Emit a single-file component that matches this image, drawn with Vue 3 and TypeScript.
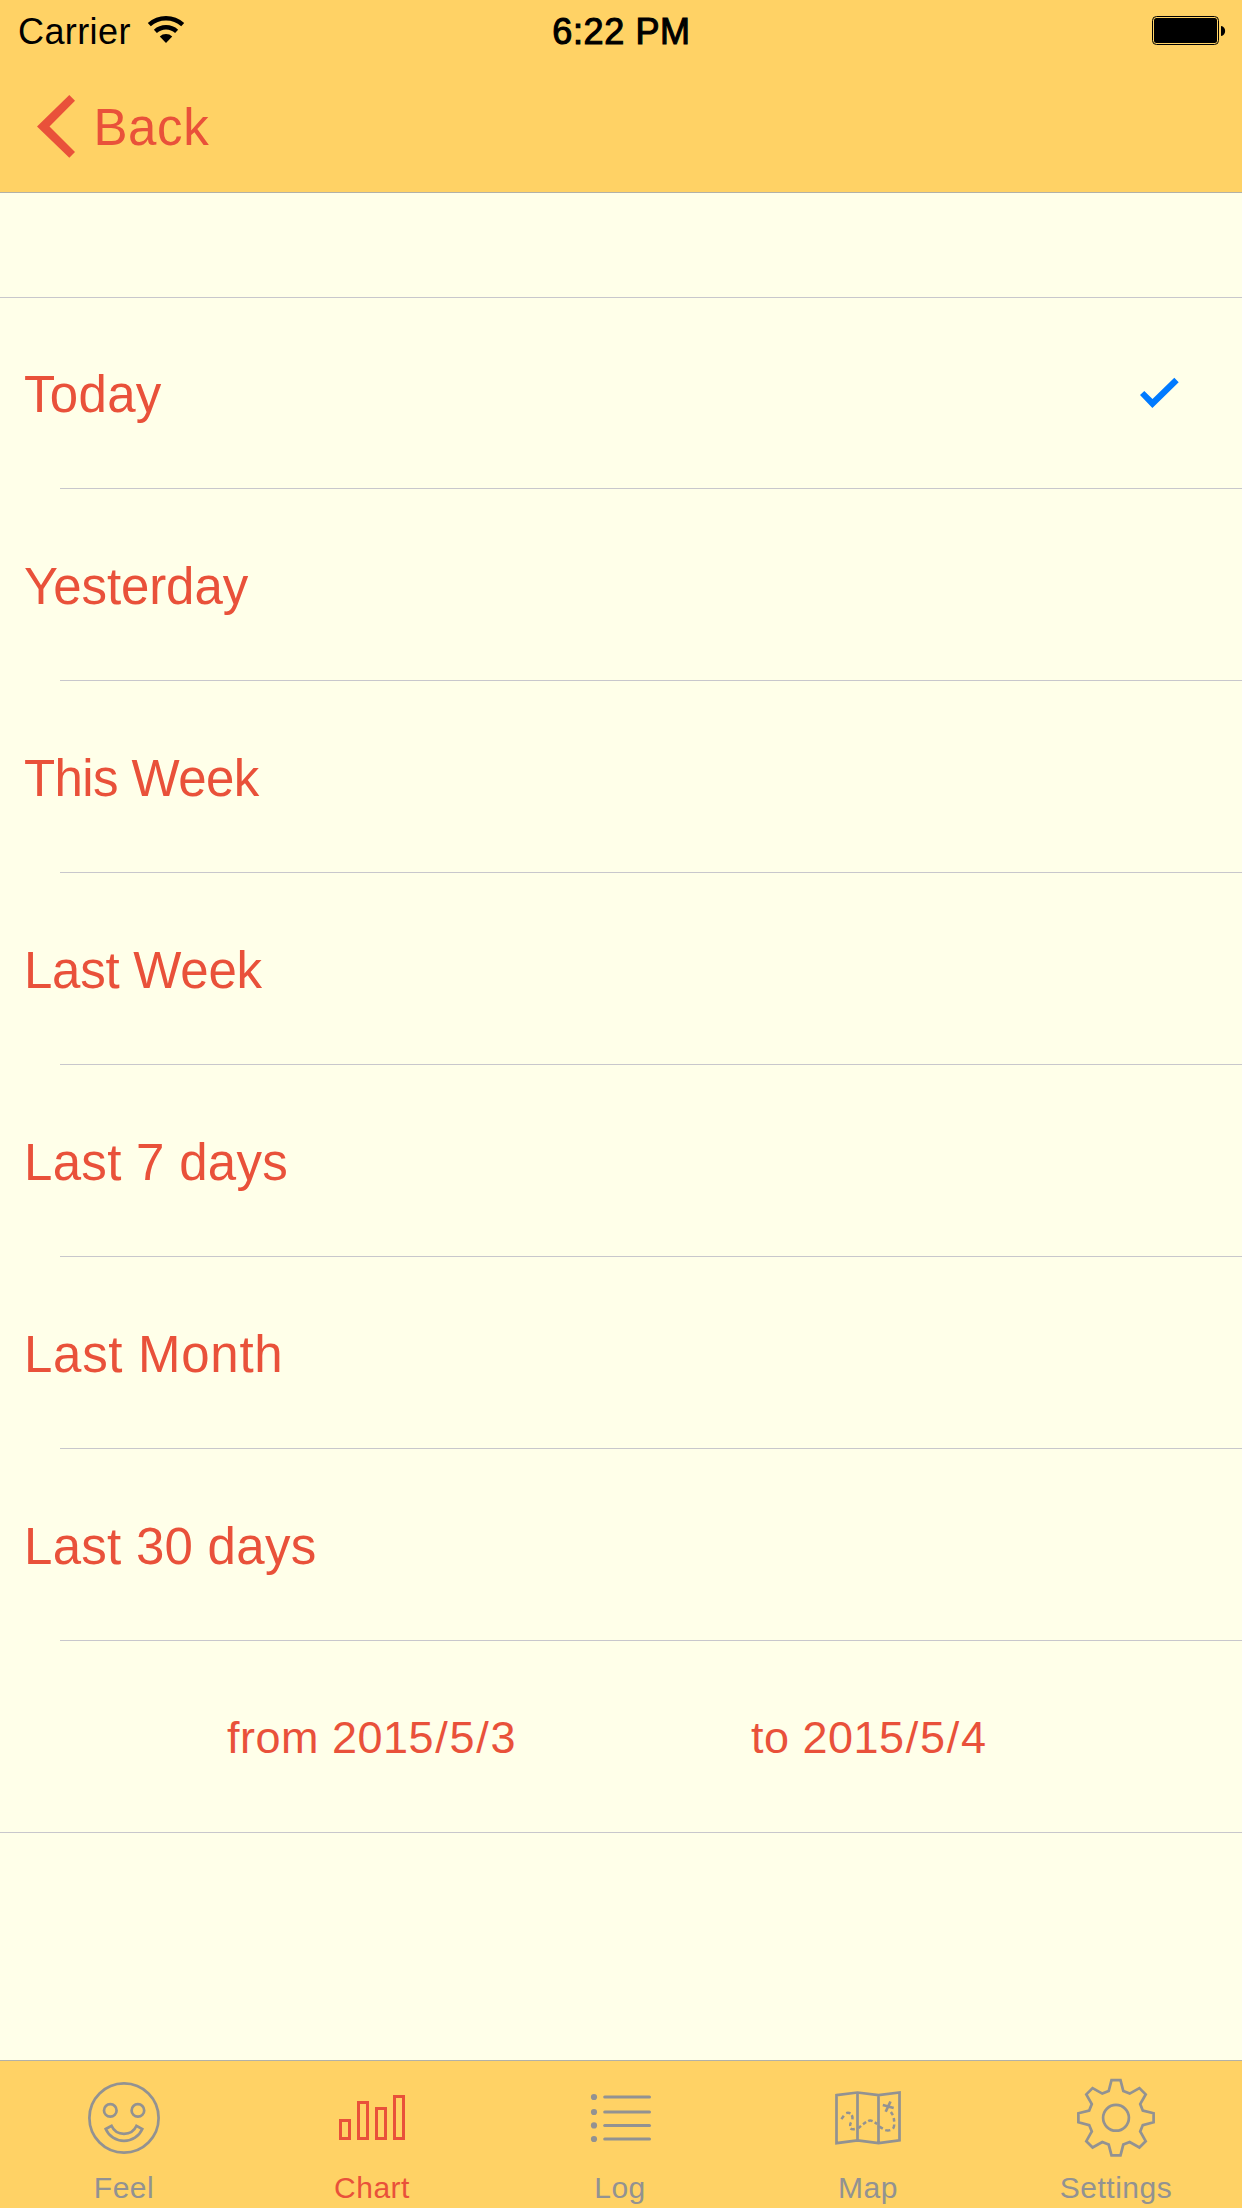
<script setup lang="ts">
import { ref } from 'vue'

interface Period {
  label: string
  spacing: number
}

interface Tab {
  id: string
  label: string
}

const periods: Period[] = [
  { label: 'Today', spacing: 0.3 },
  { label: 'Yesterday', spacing: -0.1 },
  { label: 'This Week', spacing: -0.6 },
  { label: 'Last Week', spacing: -0.25 },
  { label: 'Last 7 days', spacing: 0.3 },
  { label: 'Last Month', spacing: 0.7 },
  { label: 'Last 30 days', spacing: 0.27 },
]

const tabs: Tab[] = [
  { id: 'feel', label: 'Feel' },
  { id: 'chart', label: 'Chart' },
  { id: 'log', label: 'Log' },
  { id: 'map', label: 'Map' },
  { id: 'settings', label: 'Settings' },
]

const selected = ref('Today')
const activeTab = ref('chart')
const from = ['2015', '5', '3']
const to = ['2015', '5', '4']

const logLines = [-21, -6, 7.4, 21]
const bars = [
  { x: -31.5, y: 2.5 },
  { x: -13.5, y: -15.5 },
  { x: 4.5, y: -9.5 },
  { x: 22.5, y: -21.5 },
]

// One quarter of the gear outline, repeated by 90° turns
const quarter: [number, number][] = [
  [-4.5, -37.6], [4.5, -37.6], [7.3, -26.8], [13.7, -24.2],
  [23.4, -29.7], [29.7, -23.4], [24.2, -13.7], [26.8, -7.3],
]
const gear = [0, 1, 2, 3]
  .flatMap((turn) =>
    quarter.map(([x, y]) => {
      let p: [number, number] = [x, y]
      for (let i = 0; i < turn; i++) p = [-p[1], p[0]]
      return p.join(',')
    }),
  )
  .join(' ')
</script>

<template>
  <div class="screen">
    <header class="top">
      <div class="status">
        <div class="carrier">
          <span>Carrier</span>
          <svg class="wifi" width="38" height="30" viewBox="-19 -28 38 30">
            <g fill="none" stroke="#000" stroke-width="4.5">
              <path d="M-16.7-18.4A24.8 24.8 0 0 1 16.7-18.4" />
              <path d="M-10.6-11.7A15.8 15.8 0 0 1 10.6-11.7" />
            </g>
            <path d="M0 0L-6.2-6.6A9 9 0 0 1 6.2-6.6Z" />
          </svg>
        </div>
        <div class="time">6:22 PM</div>
        <svg class="battery" width="74" height="30" viewBox="1152 16 74 30">
          <rect x="1152.5" y="16.5" width="66" height="28" rx="4" fill="none" stroke="#000" />
          <rect x="1154" y="18" width="63" height="25" rx="2.5" />
          <path d="M1221 26C1226.500 26.500 1226.500 35.500 1221 36Z" />
        </svg>
      </div>
      <nav class="nav">
        <button class="back">
          <svg width="38" height="63" viewBox="37 95 38 63">
            <path d="M37 126.400L69.300 95L75 100.700L49.500 126.400L75 152L69.300 157.800Z" fill="#e9513a" />
          </svg>
          <span>Back</span>
        </button>
      </nav>
    </header>

    <main class="content">
      <ul class="list">
        <li v-for="p in periods" :key="p.label" class="row" @click="selected = p.label">
          <span :style="{ letterSpacing: p.spacing + 'px' }">{{ p.label }}</span>
          <svg v-if="p.label === selected" class="check" width="40" height="32" viewBox="1140 377 40 32">
            <path d="M1140 395L1144.300 391L1152.500 399L1174.300 377.700L1178.700 382.300L1152.400 408Z" fill="#007aff" />
          </svg>
        </li>
        <li class="row range">
          <span class="from">from {{ from[0] }}<i>/</i>{{ from[1] }}<i>/</i>{{ from[2] }}</span>
          <span class="to">to {{ to[0] }}<i>/</i>{{ to[1] }}<i>/</i>{{ to[2] }}</span>
        </li>
      </ul>
    </main>

    <footer class="tabs">
      <button
        v-for="t in tabs"
        :key="t.id"
        class="tab"
        :class="{ active: t.id === activeTab }"
        @click="activeTab = t.id"
      >
        <svg width="110" height="90" viewBox="-55 -45 110 90" fill="none" stroke="currentColor" stroke-width="2.7">
          <template v-if="t.id === 'feel'">
            <circle r="34.600" />
            <circle cx="-13.700" cy="-7.600" r="6.300" />
            <circle cx="13.900" cy="-7.600" r="6.300" />
            <path d="M-18.300 11L-12.500 7.800A13.700 13.700 0 0 0 12.500 7.800L18.300 11A20 20 0 0 1-18.300 11Z" />
          </template>
          <template v-else-if="t.id === 'chart'">
            <rect v-for="b in bars" :key="b.x" :x="b.x" :y="b.y" width="9" :height="20.5 - b.y" stroke-width="3" />
          </template>
          <template v-else-if="t.id === 'log'">
            <g v-for="y in logLines" :key="y">
              <circle cx="-26" :cy="y" r="3.100" fill="currentColor" stroke="none" />
              <path :d="`M-15.300 ${y}H29.500`" stroke-width="3" stroke-linecap="round" />
            </g>
          </template>
          <template v-else-if="t.id === 'map'">
            <path d="M-31.500-22.900L-10.500-25.500L10.500-22.900L31.500-25.500V22.400L10.500 25.200L-10.500 22.400L-31.500 25.200ZM-10.500-25.500V22.400M10.500-22.900V25.200" />
            <path
              stroke-width="2.500"
              d="M-26.600 1.100L-24.200-2.300M-21.800-4.900Q-19.800-5.600-17.500-4.600M-16.200-2.900Q-15.200-1-15.600 1.400M-17 4.400Q-18.200 6.500-17.800 8M-17.500 10.500Q-16 11.600-13.200 11.100M-9.500 10.100L-7 7.900M-5 6.300L-1.900 4.100M.2 3.100Q2 2.100 4.600 3.100M6.700 4.400L9.200 6M11 8.400L14.800 10.600M17.200 12.100Q19.800 12.900 22.300 12.100M25 10.700Q26.200 9.200 26.200 6.500M26.200 3.700L25.800 0M24.900-2.800L22.900-6"
            />
            <path d="M14.800-13L25.700-10M22.500-16.500L17.700-6.300" />
          </template>
          <template v-else>
            <g transform="translate(0 -0.200)">
              <polygon :points="gear" />
              <circle r="12.900" />
            </g>
          </template>
        </svg>
        <span>{{ t.label }}</span>
      </button>
    </footer>
  </div>
</template>

<style>
body {
  margin: 0;
}
</style>

<style scoped>
.screen {
  display: flex;
  flex-direction: column;
  width: 1242px;
  height: 2208px;
  overflow: hidden;
  background: #ffffe9;
  color: #e9513a;
  font-family: "Liberation Sans", Arial, sans-serif;
}
button {
  margin: 0;
  padding: 0;
  border: 0;
  background: none;
  color: inherit;
  font: inherit;
}
svg {
  display: block;
}
.top {
  box-sizing: border-box;
  height: 193px;
  background: #ffd265;
  border-bottom: 1px solid #b2b1a8;
}
.status {
  display: grid;
  grid-template-columns: 1fr auto 1fr;
  height: 60px;
  color: #000;
  font-size: 36px;
  line-height: 64px;
}
.carrier {
  display: flex;
  padding-left: 18px;
  letter-spacing: 0.4px;
}
.wifi {
  margin: 15px 0 0 16px;
}
.time {
  padding-left: 1px;
  letter-spacing: 0.6px;
  -webkit-text-stroke: 1.1px #000;
}
.battery {
  justify-self: end;
  margin: 16px 16px 0 0;
}
.nav {
  display: flex;
  padding: 35px 0 0 37px;
}
.back {
  display: flex;
  gap: 18.5px;
  font-size: 51px;
  line-height: 63px;
  letter-spacing: 0.6px;
}
.back span {
  margin-top: 1px;
}
.content {
  flex: 1;
  padding-top: 104px;
}
.list {
  margin: 0;
  padding: 0;
  list-style: none;
  background: linear-gradient(#c8c7cc, #c8c7cc) top / 100% 1px no-repeat;
}
.row {
  display: flex;
  align-items: center;
  justify-content: space-between;
  height: 192px;
  padding: 0 62px 0 24px;
  box-sizing: border-box;
  font-size: 51px;
  background: linear-gradient(#c8c7cc, #c8c7cc) 60px bottom / 100% 1px no-repeat;
}
.row span {
  margin-top: 2px;
}
.range {
  justify-content: flex-start;
  padding: 0;
  font-size: 45px;
  letter-spacing: 0.5px;
  background-position: 0 bottom;
}
.range i {
  padding: 0 1.2px;
  font-style: normal;
}
.from {
  width: 524px;
  padding-left: 227px;
  box-sizing: border-box;
}
.to {
  padding-left: 227px;
}
.tabs {
  display: flex;
  box-sizing: border-box;
  height: 148px;
  background: #ffd265;
  border-top: 1px solid #b2b1a8;
}
.tab {
  display: flex;
  flex-direction: column;
  align-items: center;
  width: 248px;
  padding-top: 12px;
  color: #929292;
  font-size: 30px;
  line-height: 34px;
  letter-spacing: 0.5px;
}
.tab span {
  margin-top: 8px;
}
.tab.active {
  color: #e9513a;
}
</style>
